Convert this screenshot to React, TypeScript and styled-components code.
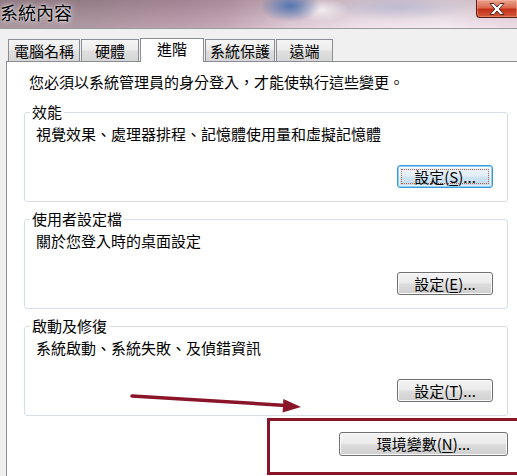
import React from 'react'
import styled, { createGlobalStyle } from 'styled-components'

const GlobalStyle = createGlobalStyle`
  html, body {
    margin: 0;
    padding: 0;
    background: #f0f0f0;
  }
  body {
    font-family: "Noto Sans CJK TC", "Noto Sans", sans-serif;
    font-size: 15px;
    color: #000;
  }
`

const Dialog = styled.div`
  position: relative;
  width: 517px;
  height: 476px;
  overflow: hidden;
  display: flex;
  flex-direction: column;
  background: #f0f0f0;
`

const TitleBar = styled.div`
  height: 28px;
  display: flex;
  align-items: flex-start;
  border-bottom: 1px solid #9a9a9a;
  background:
    radial-gradient(ellipse 30px 16px at 290px 6px, rgba(55, 105, 175, 0.8), rgba(55, 105, 175, 0) 100%),
    radial-gradient(ellipse 26px 12px at 322px 10px, rgba(255, 255, 255, 0.7), rgba(255, 255, 255, 0) 100%),
    radial-gradient(ellipse 70px 12px at 400px 8px, rgba(140, 160, 205, 0.35), rgba(140, 160, 205, 0) 100%),
    linear-gradient(to bottom, rgba(70, 50, 60, 0.2), rgba(255, 255, 255, 0.1)),
    linear-gradient(to right, #a08b93 0%, #a88f9a 18%, #b898a8 36%, #c2a2b2 44%, #dcc5d2 56%, #efe0ea 70%, #f5e9f1 86%, #ecd8e4 100%);
`

const Title = styled.div`
  font-size: 18px;
  line-height: 25px;
  text-shadow: 0 0 6px rgba(255, 255, 255, 0.95), 0 0 2px rgba(255, 255, 255, 0.9);
`

const CloseButton = styled.div`
  margin-left: auto;
  width: 41px;
  height: 18px;
  box-sizing: border-box;
  border: 1px solid #5e1c12;
  border-top: none;
  border-right: none;
  border-radius: 0 0 0 4px;
  display: flex;
  align-items: center;
  justify-content: center;
  background: linear-gradient(to bottom, #eba28f 0%, #dc6a50 45%, #c4301a 55%, #d25a3a 100%);
  box-shadow: inset 0 0 0 1px rgba(255, 200, 180, 0.35);
`

const Body = styled.div`
  flex: 1;
  display: flex;
  flex-direction: column;
  padding: 9px 0 0 6px;
`

const TabStrip = styled.div`
  position: relative;
  z-index: 1;
  height: 24px;
  margin-bottom: -1px;
  padding-left: 2px;
  display: flex;
  align-items: flex-end;
`

const Tab = styled.div<{ $active?: boolean; $width: number }>`
  box-sizing: border-box;
  width: ${p => p.$width}px;
  height: ${p => (p.$active ? 24 : 22)}px;
  margin-bottom: ${p => (p.$active ? 0 : 1)}px;
  margin-right: 1px;
  border: 1px solid #898c95;
  border-bottom: none;
  display: flex;
  justify-content: center;
  align-items: ${p => (p.$active ? 'flex-start' : 'center')};
  padding-top: ${p => (p.$active ? 0 : 1)}px;
  font-size: 15px;
  line-height: 20px;
  white-space: nowrap;
  background: ${p =>
    p.$active
      ? '#ffffff'
      : 'linear-gradient(to bottom, #f5f5f5 0%, #ececec 45%, #dedede 55%, #d6d6d6 100%)'};
`

const Panel = styled.div`
  flex: 1;
  background: #ffffff;
  border-top: 1px solid #898c95;
  border-left: 1px solid #898c95;
  padding: 10px 9px 0 17px;
  display: flex;
  flex-direction: column;
`

const Intro = styled.div`
  margin: 0 0 10px 5px;
  line-height: 20px;
  white-space: nowrap;
`

const Group = styled.fieldset`
  margin: 0 0 7px 0;
  padding: 0;
  min-width: 0;
  border: 1px solid #d5dfe5;
  border-radius: 3px;
`

const Legend = styled.legend`
  margin-left: 5px;
  padding: 0 2px;
  line-height: 20px;
  font-size: 15px;
`

const GroupBody = styled.div`
  padding: 2px 14px 13px 11px;
  display: flex;
  flex-direction: column;
`

const Description = styled.div`
  line-height: 20px;
  white-space: nowrap;
`

const ButtonRow = styled.div<{ $gap: number }>`
  display: flex;
  justify-content: flex-end;
  margin-top: ${p => p.$gap}px;
`

const Button = styled.div<{ $width: number; $height?: number; $focused?: boolean }>`
  box-sizing: border-box;
  width: ${p => p.$width}px;
  height: ${p => p.$height ?? 23}px;
  border: 1px solid ${p => (p.$focused ? '#3a9ad9' : '#707070')};
  border-radius: 3px;
  display: flex;
  align-items: center;
  justify-content: center;
  font-size: 15px;
  line-height: 18px;
  white-space: nowrap;
  background: ${p =>
    p.$focused
      ? 'linear-gradient(to bottom, #eef5fb 0%, #e2eef8 48%, #cfe3f2 52%, #c3daec 100%)'
      : 'linear-gradient(to bottom, #f3f3f3 0%, #ebebeb 48%, #dddddd 52%, #cfcfcf 100%)'};
  box-shadow: ${p =>
    p.$focused
      ? 'inset 0 0 0 1px #8fd0f4, inset 0 0 0 2px rgba(255,255,255,0.6)'
      : 'inset 0 0 0 1px #fbfbfb'};

  u {
    text-decoration: underline;
    text-underline-offset: 2px;
  }
`

const FocusRing = styled.span`
  display: flex;
  align-items: center;
  justify-content: center;
  box-sizing: border-box;
  width: calc(100% - 6px);
  height: calc(100% - 6px);
  border: 1px dotted #b0604c;
`

const EnvRow = styled.div`
  display: flex;
  justify-content: flex-end;
  margin-top: 9px;
`

const Annotation = styled.svg`
  position: absolute;
  left: 0;
  top: 0;
  pointer-events: none;
`

const groups = [
  { legend: '效能', text: '視覺效果、處理器排程、記憶體使用量和虛擬記憶體', key: 'S', focused: true },
  { legend: '使用者設定檔', text: '關於您登入時的桌面設定', key: 'E', focused: false },
  { legend: '啟動及修復', text: '系統啟動、系統失敗、及偵錯資訊', key: 'T', focused: false },
]

const tabs = [
  { label: '電腦名稱', width: 72 },
  { label: '硬體', width: 58 },
  { label: '進階', width: 64, active: true },
  { label: '系統保護', width: 70 },
  { label: '遠端', width: 57 },
]

export default function App() {
  return (
    <>
      <GlobalStyle />
      <Dialog>
        <TitleBar>
          <Title>系統內容</Title>
          <CloseButton>
            <svg width="22" height="14" viewBox="0 0 22 14">
              <path
                d="M4 1.5 L8 1.5 L11 5 L14 1.5 L18 1.5 L13.2 7 L18 12.5 L14 12.5 L11 9 L8 12.5 L4 12.5 L8.8 7 Z"
                fill="#ffffff"
                stroke="#5a2a22"
                strokeWidth="1"
                strokeLinejoin="round"
              />
            </svg>
          </CloseButton>
        </TitleBar>
        <Body>
          <TabStrip>
            {tabs.map(t => (
              <Tab key={t.label} $width={t.width} $active={t.active}>
                {t.label}
              </Tab>
            ))}
          </TabStrip>
          <Panel>
            <Intro>您必須以系統管理員的身分登入，才能使執行這些變更。</Intro>
            {groups.map(g => (
              <Group key={g.legend}>
                <Legend>{g.legend}</Legend>
                <GroupBody>
                  <Description>{g.text}</Description>
                  <ButtonRow $gap={21}>
                    <Button $width={96} $focused={g.focused}>
                      {g.focused ? (
                        <FocusRing>
                          設定(<u>{g.key}</u>)...
                        </FocusRing>
                      ) : (
                        <>
                          設定(<u>{g.key}</u>)...
                        </>
                      )}
                    </Button>
                  </ButtonRow>
                </GroupBody>
              </Group>
            ))}
            <EnvRow>
              <Button $width={169} $height={24}>
                環境變數(<u>N</u>)...
              </Button>
            </EnvRow>
          </Panel>
        </Body>
        <Annotation width="517" height="476" viewBox="0 0 517 476">
          <line x1="132" y1="396" x2="286" y2="405.4" stroke="#8b1528" strokeWidth="3.5" strokeLinecap="round" />
          <polygon points="301,407 283.4,399 282.6,412.4" fill="#8b1528" />
          <rect x="268.5" y="419.5" width="260" height="54" fill="none" stroke="#8b1528" strokeWidth="3" />
        </Annotation>
      </Dialog>
    </>
  )
}
